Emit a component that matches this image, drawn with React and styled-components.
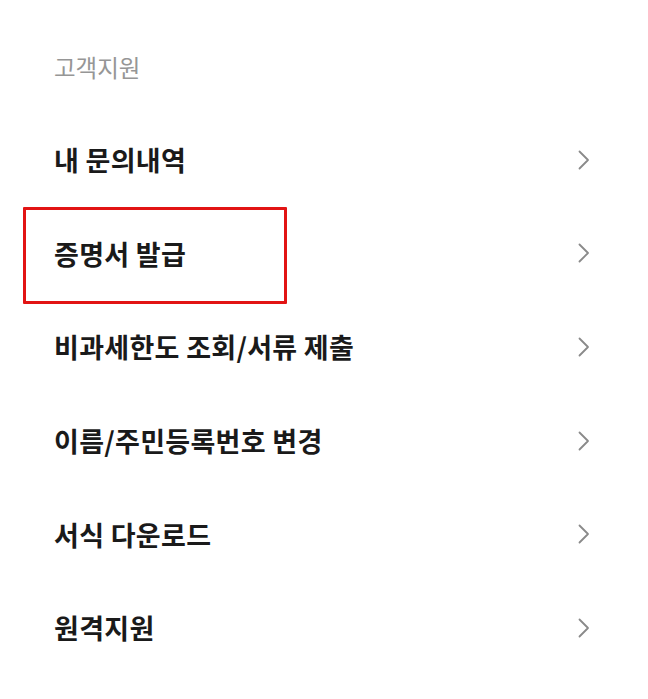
import React from 'react'
import styled, { createGlobalStyle } from 'styled-components'

const GlobalStyle = createGlobalStyle`
  body {
    margin: 0;
    background: #ffffff;
    font-family: 'Noto Sans CJK KR', 'Noto Sans', sans-serif;
  }
`

const Page = styled.div`
  width: 648px;
  height: 699px;
  background: #ffffff;
  overflow: hidden;
`

const SectionTitle = styled.div`
  height: 113px;
  padding: 50px 0 0 54px;
  box-sizing: border-box;
  font-size: 23.5px;
  font-weight: 400;
  color: #969696;
`

const Menu = styled.ul`
  list-style: none;
  margin: 0;
  padding: 0;
`

const Row = styled.li`
  position: relative;
  height: 93.6px;
  display: flex;
  align-items: center;
  justify-content: space-between;
  padding: 0 57px 0 54px;
`

const Label = styled.span`
  font-size: 27px;
  font-weight: 700;
  color: #1a1a1a;
  letter-spacing: 0.3px;
`

const Highlight = styled.div`
  position: absolute;
  left: 23px;
  top: 0;
  width: 264px;
  height: 97px;
  border: 3px solid #e21414;
  box-sizing: border-box;
  border-radius: 1px;
  pointer-events: none;
`

const Chevron = () => (
  <svg width="14" height="20" viewBox="0 0 14 20" fill="none">
    <path d="M2.5 1.5 L11 10 L2.5 18.5" stroke="#8a8a8a" strokeWidth="1.8" strokeLinecap="round" strokeLinejoin="round" />
  </svg>
)

const items = [
  { id: 'inquiry', label: '내 문의내역' },
  { id: 'cert', label: '증명서 발급', marked: true },
  { id: 'taxfree', label: '비과세한도 조회/서류 제출' },
  { id: 'name', label: '이름/주민등록번호 변경' },
  { id: 'forms', label: '서식 다운로드' },
  { id: 'remote', label: '원격지원' }
]

export default function App() {
  return (
    <Page>
      <GlobalStyle />
      <SectionTitle>고객지원</SectionTitle>
      <Menu>
        {items.map(item => (
          <Row key={item.id}>
            <Label>{item.label}</Label>
            <Chevron />
            {item.marked && <Highlight />}
          </Row>
        ))}
      </Menu>
    </Page>
  )
}
